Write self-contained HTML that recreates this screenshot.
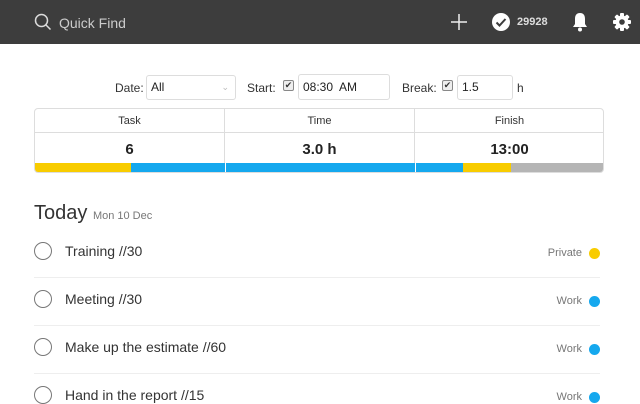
<!DOCTYPE html><html><head><style>
*{margin:0;padding:0;box-sizing:border-box}
body{width:640px;height:400px;overflow:hidden;background:#fff;font-family:"Liberation Sans",sans-serif;color:#333;position:relative}
.a{position:absolute}
.hdr{left:0;top:0;width:640px;height:44px;background:#3d3d3d}
.inp{border:1px solid #ddd;border-radius:3px;background:#fff;font-size:12px;padding:0 0 0 4px;line-height:23px;color:#222}
.lbl{font-size:12px;color:#333}
.cb{width:11px;height:11px;border:1px solid #888;border-radius:2px;background:#eee;font-size:9px;line-height:9px;text-align:center;color:#333}
.cell{text-align:center}
.circ{width:18px;height:18px;border:1.5px solid #777;border-radius:50%}
.item{font-size:14px;color:#333}
.tag{font-size:11px;color:#777;text-align:right;width:80px}
.dot{width:11px;height:11px;border-radius:50%}
.sep{height:1px;background:#eee;left:34px;width:566px}
</style></head><body>
<div class="a hdr"></div>
<svg class="a" style="left:34px;top:13px" width="18" height="18" viewBox="0 0 18 18"><circle cx="7.5" cy="7.5" r="6" fill="none" stroke="#ddd" stroke-width="1.5"/><line x1="12" y1="12" x2="16.5" y2="16.5" stroke="#ddd" stroke-width="1.5"/></svg>
<div class="a" style="left:59px;top:15px;font-size:14px;color:#ccc">Quick Find</div>
<svg class="a" style="left:450px;top:13px" width="18" height="18"><path d="M9 1V17M1 9H17" stroke="#eee" stroke-width="1.5"/></svg>
<svg class="a" style="left:491px;top:12px" width="20" height="20"><circle cx="10" cy="10" r="9" fill="#fff"/><path d="M5.5 10.5l3 3 6-6.5" fill="none" stroke="#3d3d3d" stroke-width="2"/></svg>
<div class="a" style="left:517px;top:16px;font-size:11px;font-weight:bold;color:#ddd">29928</div>
<svg class="a" style="left:571px;top:11px" width="18" height="22" viewBox="0 0 18 22"><path d="M9 2C5 2 4 5 4 8v5l-2 3h14l-2-3V8c0-3-1-6-5-6z" fill="#fff"/><circle cx="9" cy="18.5" r="2" fill="#fff"/></svg>
<svg class="a" style="left:612px;top:12px" width="20" height="20" viewBox="0 0 20 20"><g fill="#fff"><circle cx="10" cy="10" r="6.5"/><g id="t"><rect x="8" y="1" width="4" height="18" rx="1"/></g><rect x="8" y="1" width="4" height="18" rx="1" transform="rotate(45 10 10)"/><rect x="8" y="1" width="4" height="18" rx="1" transform="rotate(90 10 10)"/><rect x="8" y="1" width="4" height="18" rx="1" transform="rotate(135 10 10)"/></g><circle cx="10" cy="10" r="2.8" fill="#3d3d3d"/></svg>

<div class="a lbl" style="left:115px;top:81px">Date:</div>
<div class="a inp" style="left:146px;top:75px;width:90px;height:25px">All<span style="position:absolute;right:6px;top:0;color:#bbb;font-size:9px">&#8964;</span></div>
<div class="a lbl" style="left:247px;top:81px">Start:</div>
<div class="a cb" style="left:283px;top:80px">&#10004;</div>
<div class="a inp" style="left:298px;top:74px;width:92px;height:26px;line-height:24px">08:30&nbsp; AM</div>
<div class="a lbl" style="left:402px;top:81px">Break:</div>
<div class="a cb" style="left:442px;top:80px">&#10004;</div>
<div class="a inp" style="left:457px;top:75px;width:56px;height:25px">1.5</div>
<div class="a lbl" style="left:517px;top:81px">h</div>

<div class="a" style="left:34px;top:108px;width:570px;height:65px;border:1px solid #ddd;border-radius:4px;overflow:hidden">
<div class="a" style="left:189px;top:0;width:1px;height:54px;background:#ddd"></div>
<div class="a" style="left:379px;top:0;width:1px;height:54px;background:#ddd"></div>
<div class="a" style="left:0;top:23px;width:570px;height:1px;background:#ddd"></div>
<div class="a cell" style="left:0;top:6px;width:189px;font-size:11px">Task</div>
<div class="a cell" style="left:190px;top:6px;width:189px;font-size:11px">Time</div>
<div class="a cell" style="left:380px;top:6px;width:189px;font-size:11px">Finish</div>
<div class="a cell" style="left:0;top:32px;width:189px;font-size:15px;font-weight:bold;color:#222">6</div>
<div class="a cell" style="left:190px;top:32px;width:189px;font-size:15px;font-weight:bold;color:#222">3.0 h</div>
<div class="a cell" style="left:380px;top:32px;width:189px;font-size:15px;font-weight:bold;color:#222">13:00</div>
<div class="a" style="left:0;top:54px;width:96px;height:10px;background:#f8cc00"></div>
<div class="a" style="left:96px;top:54px;width:94px;height:10px;background:#15a8ee"></div>
<div class="a" style="left:191px;top:54px;width:189px;height:10px;background:#15a8ee"></div>
<div class="a" style="left:381px;top:54px;width:47px;height:10px;background:#15a8ee"></div>
<div class="a" style="left:428px;top:54px;width:48px;height:10px;background:#f8cc00"></div>
<div class="a" style="left:476px;top:54px;width:94px;height:10px;background:#b5b5b5"></div>
</div>

<div class="a" style="left:34px;top:202px;font-size:20px;color:#333">Today <span style="font-size:11px;color:#777">Mon 10 Dec</span></div>

<div class="a circ" style="left:34px;top:242px"></div><div class="a item" style="left:65px;top:243px">Training //30</div><div class="a tag" style="left:502px;top:247px">Private</div><div class="a dot" style="left:589px;top:248px;background:#f8cc00"></div>
<div class="a sep" style="top:277px"></div>
<div class="a circ" style="left:34px;top:290px"></div><div class="a item" style="left:65px;top:291px">Meeting //30</div><div class="a tag" style="left:502px;top:295px">Work</div><div class="a dot" style="left:589px;top:296px;background:#15a8ee"></div>
<div class="a sep" style="top:325px"></div>
<div class="a circ" style="left:34px;top:338px"></div><div class="a item" style="left:65px;top:339px">Make up the estimate //60</div><div class="a tag" style="left:502px;top:343px">Work</div><div class="a dot" style="left:589px;top:344px;background:#15a8ee"></div>
<div class="a sep" style="top:373px"></div>
<div class="a circ" style="left:34px;top:386px"></div><div class="a item" style="left:65px;top:387px">Hand in the report //15</div><div class="a tag" style="left:502px;top:391px">Work</div><div class="a dot" style="left:589px;top:392px;background:#15a8ee"></div>
</body></html>
